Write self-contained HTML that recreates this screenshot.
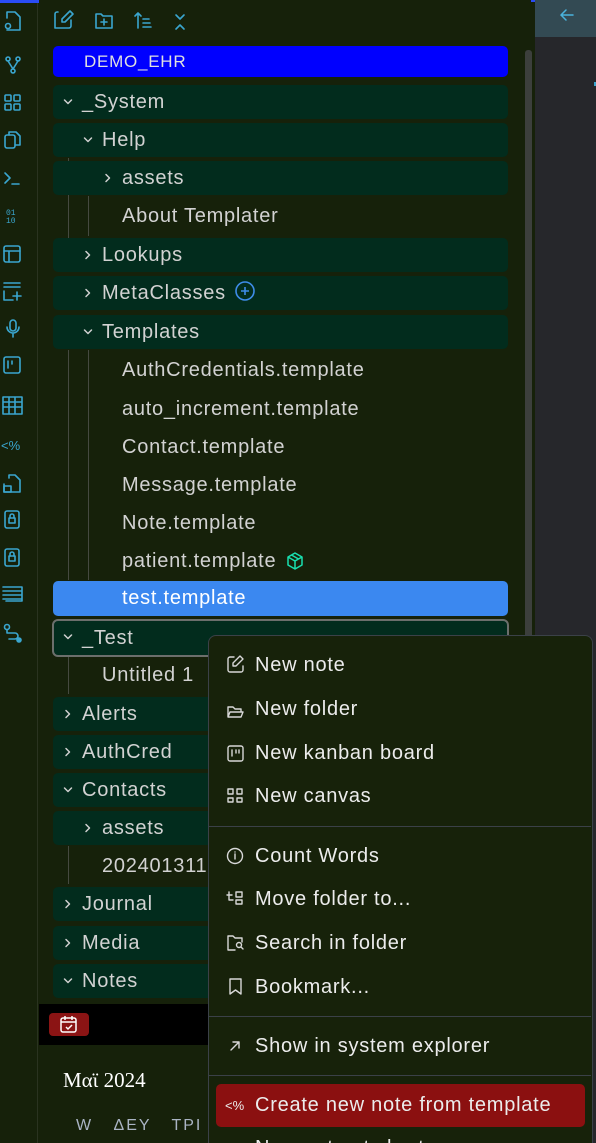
<!DOCTYPE html>
<html><head><meta charset="utf-8"><style>
*{margin:0;padding:0;box-sizing:border-box}
html,body{width:596px;height:1143px;overflow:hidden}
body{background:#16210a;font-family:"Liberation Sans","DejaVu Sans",sans-serif;position:relative;color:#d2d2d2}
.a{position:absolute}
.rib{left:0;top:0;width:38px;height:1143px;background:#16210a;border-right:1px solid #2a3320}
.row{position:absolute;left:53px;width:455px;height:34px;border-radius:5px;font-size:20px;letter-spacing:0.75px;line-height:35px;white-space:nowrap}
.f{background:#022c1d}
.cv{position:absolute;top:12px;width:10px;height:10px}
.mi{position:absolute;left:255px;font-size:20px;letter-spacing:0.75px;color:#ececec;white-space:nowrap}
.sep{position:absolute;left:209px;width:382px;height:1px;background:#3b4148}
svg{overflow:visible}
</style></head><body>
<svg width="0" height="0" style="position:absolute"><defs>
<symbol id="d" viewBox="0 0 10 10"><path d="M1.5 3l3.5 3.5 3.5-3.5" fill="none" stroke="#cfcfcf" stroke-width="1.5" stroke-linecap="round" stroke-linejoin="round"/></symbol>
<symbol id="r" viewBox="0 0 10 10"><path d="M3 1.5l3.5 3.5-3.5 3.5" fill="none" stroke="#cfcfcf" stroke-width="1.5" stroke-linecap="round" stroke-linejoin="round"/></symbol>
</defs></svg>
<div class="a rib"></div>
<div class="a" style="left:0;top:0;width:39px;height:3px;background:#2a4cf5"></div>
<svg class="a" style="left:0;top:0" width="38" height="650" fill="none" stroke="#3aa6cf" stroke-width="1.6" stroke-linecap="round" stroke-linejoin="round">
<path d="M7 18v-6h8l5 5v13h-13"/><circle cx="8" cy="26" r="2.5"/>
<circle cx="8" cy="59" r="2"/><circle cx="18" cy="59" r="2"/><circle cx="13" cy="71" r="2"/><path d="M8 61l5 8M18 61l-5 8"/>
<rect x="5" y="95" width="6" height="6" rx="1"/><rect x="14" y="95" width="6" height="6" rx="1"/><rect x="5" y="104" width="6" height="6" rx="1"/><rect x="14" y="104" width="6" height="6" rx="1"/>
<rect x="5" y="135" width="10" height="13" rx="2"/><path d="M9 135v-3h7l4 4v9h-5"/>
<path d="M5 173l5 5-5 5M12 184h7"/>
<text x="6" y="215" font-size="8" fill="#3aa6cf" stroke="none" font-family="Liberation Mono">01</text><text x="6" y="223" font-size="8" fill="#3aa6cf" stroke="none" font-family="Liberation Mono">10</text>
<rect x="4" y="246" width="16" height="16" rx="2"/><path d="M4 251h16M9 251v11"/>
<path d="M4 283h16M4 287h16M4 291v9h9M17 292v8M13 296h8"/>
<rect x="10" y="320" width="6" height="11" rx="3"/><path d="M7 327a6 6 0 0 0 12 0M13 333v4"/>
<rect x="4" y="357" width="16" height="16" rx="2"/><path d="M8 361v7M12 361v3"/>
<path d="M3 397h19v17h-19zM3 402h19M3 407h19M9 397v17M15 397v17"/>
<text x="1" y="450" font-size="13" fill="#3aa6cf" stroke="none">&lt;%</text>
<path d="M9 478v-3h6l5 5v12h-16v-8"/><rect x="4" y="486" width="7" height="6"/>
<rect x="5" y="511" width="14" height="17" rx="2"/><rect x="9" y="518" width="6" height="5"/><path d="M10 518v-2a2 2 0 0 1 4 0v2"/>
<rect x="5" y="549" width="14" height="17" rx="2"/><rect x="9" y="556" width="6" height="5"/><path d="M10 556v-2a2 2 0 0 1 4 0v2"/>
<path d="M3 587h19v14h-16M3 591h19M3 595h19M3 599h19"/>
<circle cx="7" cy="627" r="2.5"/><path d="M7 630v3h8a3 3 0 0 1 0 6h-6"/><circle cx="19" cy="640" r="2" fill="#3aa6cf"/>
</svg>
<svg class="a" style="left:50px;top:6px" width="150" height="30" fill="none" stroke="#3aa6cf" stroke-width="1.6" stroke-linecap="round" stroke-linejoin="round">
<path d="M8 6h-1a2 2 0 0 0-2 2v14h14a2 2 0 0 0 2-2v-6"/><path d="M20 5l3 3-8 8h-3v-3z"/>
<path d="M46 8h5l2 2h9v12h-16z"/><path d="M54 13v6M51 16h6"/>
<path d="M88 22v-15M85 10l3-3 3 3M93 13h6M93 17h7M93 21h8"/>
<path d="M126 9l4 4 4-4M126 23l4-4 4 4"/>
</svg>
<div class="a" style="left:535px;top:0;width:61px;height:1143px;background:#26272b"></div>
<div class="a" style="left:535px;top:0;width:61px;height:37px;background:#334a53"></div>
<svg class="a" style="left:559px;top:7px" width="16" height="16" fill="none" stroke="#4ab3dc" stroke-width="1.5" stroke-linecap="round"><path d="M2 8h12M7 3l-5 5 5 5"/></svg>
<div class="a" style="left:594px;top:82px;width:2px;height:4px;background:#3aa6cf"></div>
<div class="a" style="left:525px;top:50px;width:7px;height:1093px;background:#3c3f3c;border-radius:3px"></div>
<div class="a" style="left:531px;top:0;width:4px;height:2px;background:#2a4cf5"></div>
<div class="a" style="left:68px;top:158px;width:1px;height:80px;background:#454a40"></div>
<div class="a" style="left:88px;top:196px;width:1px;height:40px;background:#454a40"></div>
<div class="a" style="left:68px;top:350px;width:1px;height:230px;background:#454a40"></div>
<div class="a" style="left:88px;top:350px;width:1px;height:230px;background:#454a40"></div>
<div class="a" style="left:68px;top:656px;width:1px;height:38px;background:#454a40"></div>
<div class="a" style="left:68px;top:846px;width:1px;height:38px;background:#454a40"></div>
<div class="row" style="top:46px;height:31px;line-height:31px;background:#0000ff;font-size:17px;padding-left:31px;color:#e0e0e0">DEMO_EHR</div>
<div class="row f" style="top:85px"><svg class="cv" style="left:10px"><use href="#d"/></svg><span style="position:absolute;left:29px">_System</span></div>
<div class="row f" style="top:123px"><svg class="cv" style="left:30px"><use href="#d"/></svg><span style="position:absolute;left:49px">Help</span></div>
<div class="row f" style="top:161px"><svg class="cv" style="left:50px"><use href="#r"/></svg><span style="position:absolute;left:69px">assets</span></div>
<div class="row" style="top:199px"><span style="position:absolute;left:69px">About Templater</span></div>
<div class="row f" style="top:238px"><svg class="cv" style="left:30px"><use href="#r"/></svg><span style="position:absolute;left:49px">Lookups</span></div>
<div class="row f" style="top:276px"><svg class="cv" style="left:30px"><use href="#r"/></svg><span style="position:absolute;left:49px">MetaClasses</span>
<svg style="position:absolute;left:183px;top:6px" width="20" height="20" fill="none" stroke="#3e8ce8" stroke-width="1.6"><circle cx="9" cy="9" r="9"/><path d="M9 5v8M5 9h8"/></svg></div>
<div class="row f" style="top:315px"><svg class="cv" style="left:30px"><use href="#d"/></svg><span style="position:absolute;left:49px">Templates</span></div>
<div class="row" style="top:353px"><span style="position:absolute;left:69px">AuthCredentials.template</span></div>
<div class="row" style="top:392px"><span style="position:absolute;left:69px">auto_increment.template</span></div>
<div class="row" style="top:430px"><span style="position:absolute;left:69px">Contact.template</span></div>
<div class="row" style="top:468px"><span style="position:absolute;left:69px">Message.template</span></div>
<div class="row" style="top:506px"><span style="position:absolute;left:69px">Note.template</span></div>
<div class="row" style="top:544px"><span style="position:absolute;left:69px">patient.template</span>
<svg style="position:absolute;left:234px;top:8px" width="17" height="17" fill="none" stroke="#18e0b0" stroke-width="1.5" stroke-linejoin="round"><path d="M8 1l7 4v8l-7 4-7-4v-8zM1 5l7 4 7-4M8 9v8M4.5 3l7 4"/></svg></div>
<div class="row" style="top:581px;height:35px;background:#3b88f0;color:#fff"><span style="position:absolute;left:69px">test.template</span></div>
<div class="row f" style="top:619px;left:52px;width:457px;height:38px;line-height:35px;border:2px solid #6c6f6c;border-radius:6px"><svg class="cv" style="left:9px;top:11px"><use href="#d"/></svg><span style="position:absolute;left:28px">_Test</span></div>
<div class="row" style="top:658px"><span style="position:absolute;left:49px">Untitled 1</span></div>
<div class="row f" style="top:697px"><svg class="cv" style="left:10px"><use href="#r"/></svg><span style="position:absolute;left:29px">Alerts</span></div>
<div class="row f" style="top:735px"><svg class="cv" style="left:10px"><use href="#r"/></svg><span style="position:absolute;left:29px">AuthCred</span></div>
<div class="row f" style="top:773px"><svg class="cv" style="left:10px"><use href="#d"/></svg><span style="position:absolute;left:29px">Contacts</span></div>
<div class="row f" style="top:811px"><svg class="cv" style="left:30px"><use href="#r"/></svg><span style="position:absolute;left:49px">assets</span></div>
<div class="row" style="top:849px"><span style="position:absolute;left:49px">20240131131</span></div>
<div class="row f" style="top:887px"><svg class="cv" style="left:10px"><use href="#r"/></svg><span style="position:absolute;left:29px">Journal</span></div>
<div class="row f" style="top:926px"><svg class="cv" style="left:10px"><use href="#r"/></svg><span style="position:absolute;left:29px">Media</span></div>
<div class="row f" style="top:964px"><svg class="cv" style="left:10px"><use href="#d"/></svg><span style="position:absolute;left:29px">Notes</span></div>
<div class="a" style="left:39px;top:1004px;width:180px;height:41px;background:#000"></div>
<div class="a" style="left:49px;top:1013px;width:40px;height:23px;background:#8b1414;border-radius:4px"></div>
<svg class="a" style="left:59px;top:1015px" width="20" height="20" fill="none" stroke="#fff" stroke-width="1.5"><rect x="2" y="3" width="15" height="14" rx="2"/><path d="M2 7h15M6 1v4M13 1v4M7 12l2 2 4-4"/></svg>
<div class="a" style="left:63px;top:1068px;font-family:'Liberation Serif',serif;font-size:21px;color:#fff">Μαϊ 2024</div>
<div class="a" style="left:76px;top:1117px;font-size:16px;color:#aab4c4;letter-spacing:2px;word-spacing:14px">W ΔΕΥ ΤΡΙ</div>
<div class="a" style="left:208px;top:635px;width:385px;height:520px;background:#17220a;border:1px solid #3b4148;border-radius:8px"></div>
<svg class="a" style="left:226px;top:655px" width="20" height="480" fill="none" stroke="#d8d8d8" stroke-width="1.4" stroke-linecap="round" stroke-linejoin="round">
<path d="M8 2h-4a2 2 0 0 0-2 2v11a2 2 0 0 0 2 2h11a2 2 0 0 0 2-2v-4"/><path d="M14 1l3 3-7 7h-3v-3z"/>
<path d="M2 62v-10h5l2 2h6v3M2 62l2-5h13l-2 5z"/>
<rect x="2" y="91" width="15" height="15" rx="2"/><path d="M6 95v6M10 95v3M13 95v3"/>
<rect x="2" y="134" width="5" height="5"/><rect x="11" y="134" width="5" height="5"/><rect x="2" y="143" width="5" height="4"/><rect x="11" y="143" width="5" height="4"/>
<circle cx="9" cy="201" r="7.5"/><path d="M9 199v5M9 197v0"/>
<path d="M3 237v8h4M1 240h5M10 237h6v5h-6zM10 245h6v4h-6z"/>
<path d="M2 295v-14h5l2 2h7v4M2 295h7"/><circle cx="13" cy="290" r="2.5"/><path d="M15 292l2 2"/>
<path d="M4 324h11v15l-5.5-4-5.5 4z"/>
<path d="M5 395l8-8M7 387h6v6"/>
</svg>
<div class="mi" style="top:654px">New note</div>
<div class="mi" style="top:698px">New folder</div>
<div class="mi" style="top:742px">New kanban board</div>
<div class="mi" style="top:785px">New canvas</div>
<div class="sep" style="top:826px"></div>
<div class="mi" style="top:845px">Count Words</div>
<div class="mi" style="top:888px">Move folder to...</div>
<div class="mi" style="top:932px">Search in folder</div>
<div class="mi" style="top:976px">Bookmark...</div>
<div class="sep" style="top:1016px"></div>
<div class="mi" style="top:1035px">Show in system explorer</div>
<div class="sep" style="top:1075px"></div>
<div class="a" style="left:216px;top:1084px;width:369px;height:43px;background:#8b1010;border-radius:5px"></div>
<div class="mi" style="left:225px;top:1098px;font-size:13px;letter-spacing:0">&lt;%</div>
<div class="mi" style="top:1094px">Create new note from template</div>
<div class="mi" style="top:1137px">New note at chart</div>
</body></html>
